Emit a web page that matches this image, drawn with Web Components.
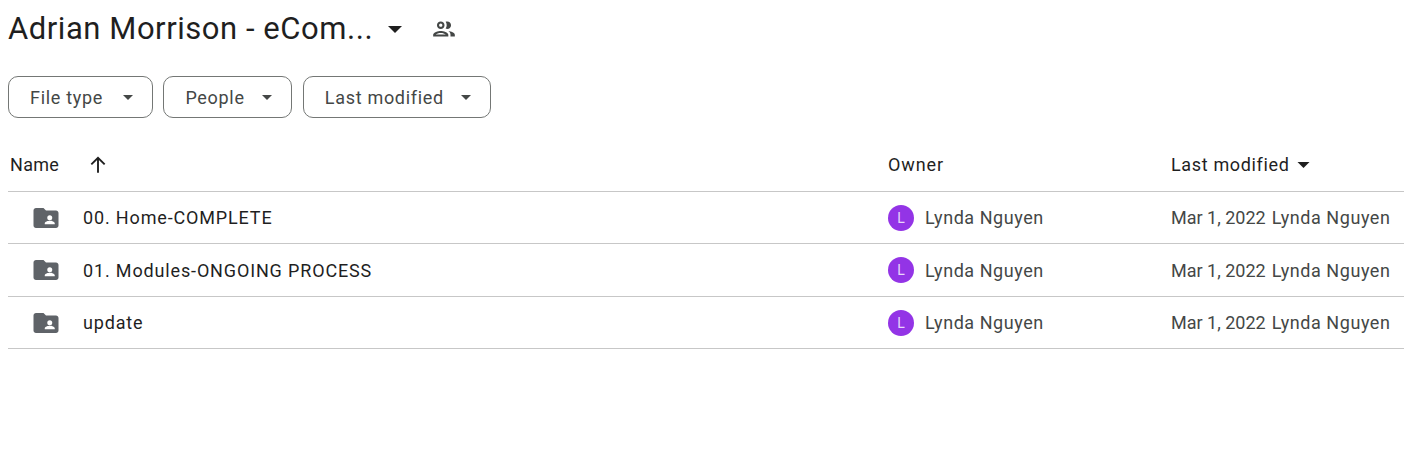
<!DOCTYPE html>
<html>
<head>
<meta charset="utf-8">
<title>Adrian Morrison - eCom...</title>
<style>
  html, body { margin: 0; background: #fff; }
  body { font-family: Roboto, "Noto Sans", sans-serif; color: #1f1f1f; width: 1404px; height: 460px; overflow: hidden; }
  .page { padding-left: 8px; display: flex; flex-direction: column; }
</style>
</head>
<body>
<div class="page">
  <drive-title>Adrian Morrison - eCom...</drive-title>
  <filter-bar>
    <filter-chip width="145">File type</filter-chip>
    <filter-chip width="129">People</filter-chip>
    <filter-chip width="188">Last modified</filter-chip>
  </filter-bar>
  <file-header></file-header>
  <file-row name="00. Home-COMPLETE"></file-row>
  <file-row name="01. Modules-ONGOING PROCESS" tall></file-row>
  <file-row name="update"></file-row>
</div>

<script>
const CARET = `<svg width="10" height="5" viewBox="0 0 10 5"><path d="M0 0h10L5 5z" fill="currentColor"/></svg>`;

class DriveTitle extends HTMLElement {
    constructor() {
        super();
        this.attachShadow({ mode: 'open' });
        this.shadowRoot.innerHTML = `
            <style>
                :host { display: flex; align-items: center; height: 56px; margin-bottom: 2px; }
                .text { font-size: 31px; font-weight: 400; color: #1f1f1f; letter-spacing: 0.55px; white-space: nowrap; }
                .caret { display: flex; margin-left: 15px; margin-top: 2px; color: #1f1f1f; }
                .caret svg { width: 14px; height: 7px; }
                .people { display: flex; margin-left: 29px; margin-top: 1px; color: #444746; }
            </style>
            <span class="text"><slot></slot></span>
            <span class="caret">${CARET}</span>
            <span class="people">
                <svg width="26" height="26" viewBox="0 0 24 24" fill="currentColor">
                    <path d="M9 13.75c-2.34 0-7 1.17-7 3.5V19h14v-1.75c0-2.33-4.66-3.5-7-3.5zM4.34 17c.84-.58 2.87-1.25 4.66-1.25s3.82.67 4.66 1.25H4.34zM9 12c1.93 0 3.5-1.57 3.5-3.5S10.93 5 9 5 5.5 6.57 5.5 8.5 7.07 12 9 12zm0-5c.83 0 1.5.67 1.5 1.5S9.83 10 9 10s-1.5-.67-1.5-1.5S8.17 7 9 7zm7.04 6.81c1.16.84 1.96 1.96 1.96 3.44V19h4v-1.75c0-2.02-3.5-3.17-5.96-3.44zM15 12c1.93 0 3.5-1.57 3.5-3.5S16.93 5 15 5c-.54 0-1.04.13-1.5.35.63.89 1 1.98 1 3.15s-.37 2.26-1 3.15c.46.22.96.35 1.5.35z"/>
                </svg>
            </span>
        `;
    }
}

class FilterBar extends HTMLElement {
    constructor() {
        super();
        this.attachShadow({ mode: 'open' });
        this.shadowRoot.innerHTML = `
            <style>
                :host { display: flex; gap: 10.4px; margin-top: 18px; }
            </style>
            <slot></slot>
        `;
    }
}

class FilterChip extends HTMLElement {
    constructor() {
        super();
        this.attachShadow({ mode: 'open' });
    }

    connectedCallback() {
        const width = this.getAttribute('width');
        this.shadowRoot.innerHTML = `
            <style>
                :host {
                    display: flex;
                    align-items: center;
                    justify-content: space-between;
                    box-sizing: border-box;
                    width: ${width}px;
                    height: 42px;
                    padding: 0 19px 0 21px;
                    border: 1px solid #747775;
                    border-radius: 10px;
                    font-size: 18px;
                    letter-spacing: 0.7px;
                    color: #444746;
                }
                .caret { display: flex; color: #444746; }
            </style>
            <span><slot></slot></span>
            <span class="caret">${CARET}</span>
        `;
    }
}

class FileHeader extends HTMLElement {
    constructor() {
        super();
        this.attachShadow({ mode: 'open' });
        this.shadowRoot.innerHTML = `
            <style>
                :host {
                    display: grid;
                    grid-template-columns: 880px 283px 1fr;
                    align-items: center;
                    height: 74px;
                    box-sizing: border-box;
                    border-bottom: 1px solid #c7c7c7;
                    font-size: 18px;
                    color: #1f1f1f;
                    padding-top: 20px;
                }
                .name { display: flex; align-items: center; padding-left: 2px; letter-spacing: 0.3px; }
                .arrow { display: flex; margin-left: 29px; color: #1f1f1f; }
                .owner { letter-spacing: 0.9px; }
                .mod { display: flex; align-items: center; gap: 7px; letter-spacing: 0.65px; }
                .mod svg { width: 13px; height: 6px; }
            </style>
            <div class="name">Name
                <span class="arrow">
                    <svg width="20" height="20" viewBox="0 0 18 18" fill="none" stroke="currentColor" stroke-width="1.7"><path d="M9 16V3M3 8.5L9 2.5l6 6"/></svg>
                </span>
            </div>
            <div class="owner">Owner</div>
            <div class="mod">Last modified ${CARET}</div>
        `;
    }
}

class OwnerBadge extends HTMLElement {
    constructor() {
        super();
        this.attachShadow({ mode: 'open' });
        this.shadowRoot.innerHTML = `
            <style>
                :host {
                    display: flex;
                    align-items: center;
                    justify-content: center;
                    width: 26px;
                    height: 26px;
                    border-radius: 50%;
                    background: #9334e6;
                    color: #e8d6fa;
                    font-size: 14px;
                    letter-spacing: 0;
                }
            </style>
            <slot></slot>
        `;
    }
}

class FileRow extends HTMLElement {
    constructor() {
        super();
        this.attachShadow({ mode: 'open' });
    }

    connectedCallback() {
        const name = this.getAttribute('name');
        const tall = this.hasAttribute('tall');
        this.shadowRoot.innerHTML = `
            <style>
                :host {
                    display: grid;
                    grid-template-columns: 880px 283px 1fr;
                    align-items: center;
                    box-sizing: border-box;
                    height: ${tall ? 53 : 52}px;
                    border-bottom: 1px solid #c7c7c7;
                    font-size: 18px;
                }
                .name { display: flex; align-items: center; padding-left: 23px; color: #1f1f1f; letter-spacing: 0.85px; }
                .folder { display: flex; margin-right: 22px; color: #5f6368; }
                .owner { display: flex; align-items: center; gap: 11px; color: #444746; letter-spacing: 0.55px; }
                .mod { display: flex; gap: 6px; color: #444746; white-space: nowrap; }
                .by { letter-spacing: 0.55px; }
            </style>
            <div class="name">
                <span class="folder">
                    <svg width="30" height="30" viewBox="0 0 24 24" fill="currentColor">
                        <path fill-rule="evenodd" d="M4 4c-1.1 0-2 .9-2 2v12c0 1.1.9 2 2 2h16c1.1 0 2-.9 2-2V8c0-1.1-.9-2-2-2h-8l-2-2H4zm11 5.8a2 2 0 1 1 0 4 2 2 0 0 1 0-4zm-4 7.2v-.9c0-1.3 2.7-2 4-2s4 .7 4 2v.9h-8z"/>
                    </svg>
                </span>
                <span>${name}</span>
            </div>
            <div class="owner"><owner-badge>L</owner-badge><span>Lynda Nguyen</span></div>
            <div class="mod"><span>Mar 1, 2022</span><span class="by">Lynda Nguyen</span></div>
        `;
    }
}

customElements.define('drive-title', DriveTitle);
customElements.define('filter-bar', FilterBar);
customElements.define('filter-chip', FilterChip);
customElements.define('file-header', FileHeader);
customElements.define('owner-badge', OwnerBadge);
customElements.define('file-row', FileRow);
</script>
</body>
</html>
